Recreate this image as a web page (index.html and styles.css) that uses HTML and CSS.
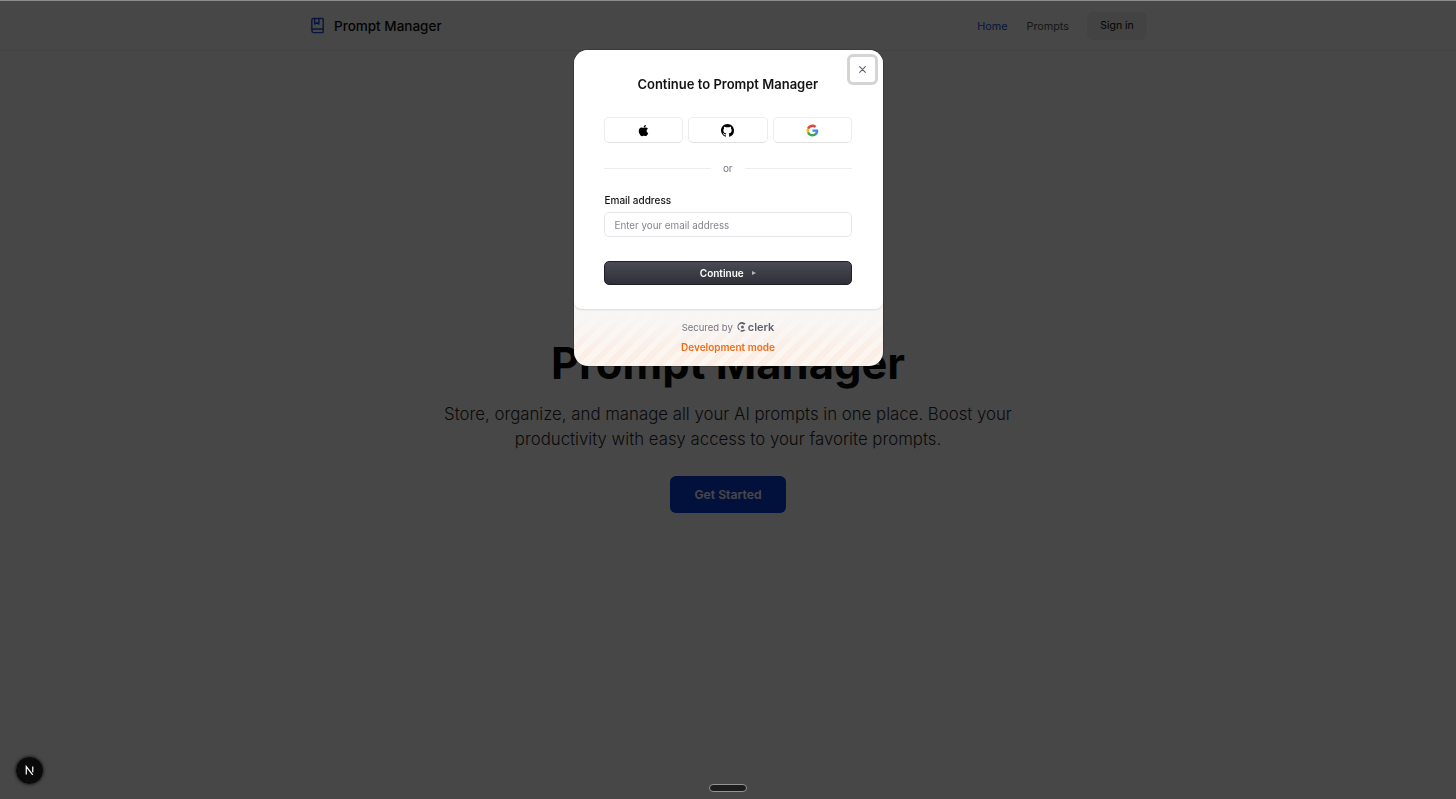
FILE: index.html
```html
<!DOCTYPE html>
<html lang="en">
<head>
    <meta charset="UTF-8">
    <meta name="viewport" content="width=device-width, initial-scale=1.0">
    <title>Prompt Manager</title>
    <link rel="stylesheet" href="styles.css">
</head>
<body>

<header class="site-header">
    <div class="header-inner">
        <a class="brand" href="#">
            <svg class="brand-icon" viewBox="0 0 24 24" fill="none" stroke="currentColor" stroke-width="2" stroke-linecap="round" stroke-linejoin="round">
                <path d="M4 19.5v-15A2.5 2.5 0 0 1 6.500 2H19a1 1 0 0 1 1 1v18a1 1 0 0 1-1 1H6.500a1 1 0 0 1 0-5H20"/>
                <path d="M8 2v8l3-2 3 2V2"/>
            </svg>
            <span>Prompt Manager</span>
        </a>
        <nav class="nav">
            <a class="nav-link active" href="#">Home</a>
            <a class="nav-link" href="#">Prompts</a>
            <button class="signin" type="button">Sign in</button>
        </nav>
    </div>
</header>

<main class="hero">
    <h1>Prompt Manager</h1>
    <p>Store, organize, and manage all your AI prompts in one place. Boost your productivity with easy access to your favorite prompts.</p>
    <button class="get-started" type="button">Get Started</button>
</main>

<div class="overlay">
    <div class="modal">
        <div class="card">
            <button class="close" type="button" aria-label="Close">
                <svg viewBox="0 0 16 16" fill="none" stroke="currentColor" stroke-width="1.300" stroke-linecap="round"><path d="M4.500 4.500l7 7M11.500 4.500l-7 7"/></svg>
            </button>
            <h2>Continue to Prompt Manager</h2>
            <div class="socials">
                <button class="social" type="button" aria-label="Apple">
                    <svg viewBox="0 0 24 24" fill="#000"><path d="M17.050 20.280c-.980.950-2.050.800-3.080.350-1.090-.460-2.090-.480-3.240 0-1.440.620-2.200.440-3.060-.350C2.790 15.250 3.510 7.590 9.050 7.310c1.350.070 2.290.740 3.080.800 1.180-.240 2.310-.930 3.570-.840 1.510.120 2.650.720 3.400 1.800-3.120 1.870-2.380 5.980.480 7.130-.570 1.500-1.310 2.990-2.540 4.090zM12.030 7.250c-.150-2.230 1.660-4.070 3.740-4.250.290 2.580-2.340 4.500-3.740 4.250z"/></svg>
                </button>
                <button class="social" type="button" aria-label="GitHub">
                    <svg viewBox="0 0 16 16" fill="#000"><path d="M8 0C3.580 0 0 3.580 0 8c0 3.540 2.290 6.530 5.470 7.590.400.070.550-.170.550-.380 0-.190-.010-.820-.010-1.490-2.010.370-2.530-.490-2.690-.940-.090-.230-.480-.940-.820-1.130-.280-.150-.680-.520-.010-.530.630-.010 1.080.580 1.230.820.720 1.210 1.870.870 2.330.660.070-.520.280-.870.510-1.070-1.780-.200-3.640-.890-3.640-3.950 0-.870.310-1.590.820-2.150-.080-.200-.360-1.020.080-2.120 0 0 .670-.210 2.200.820.640-.180 1.320-.270 2-.270s1.360.090 2 .270c1.530-1.040 2.200-.820 2.200-.820.440 1.100.160 1.920.080 2.120.510.560.820 1.270.820 2.150 0 3.070-1.870 3.750-3.650 3.950.290.250.540.730.540 1.480 0 1.070-.010 1.930-.010 2.200 0 .210.150.460.550.380A8.010 8.010 0 0 0 16 8c0-4.420-3.580-8-8-8z"/></svg>
                </button>
                <button class="social" type="button" aria-label="Google">
                    <svg viewBox="0 0 24 24">
                        <path fill="#4285F4" d="M22.560 12.250c0-.780-.070-1.530-.200-2.250H12v4.260h5.920c-.260 1.370-1.040 2.530-2.210 3.310v2.770h3.570c2.080-1.920 3.280-4.740 3.280-8.090z"/>
                        <path fill="#34A853" d="M12 23c2.970 0 5.460-.980 7.280-2.660l-3.570-2.770c-.980.660-2.230 1.060-3.710 1.060-2.860 0-5.290-1.930-6.160-4.530H2.180v2.840C3.990 20.530 7.700 23 12 23z"/>
                        <path fill="#FBBC05" d="M5.840 14.090c-.220-.660-.350-1.360-.350-2.090s.130-1.430.350-2.090V7.070H2.180C1.430 8.550 1 10.220 1 12s.430 3.450 1.180 4.930l3.660-2.840z"/>
                        <path fill="#EA4335" d="M12 5.380c1.620 0 3.060.560 4.210 1.640l3.150-3.150C17.450 2.090 14.970 1 12 1 7.700 1 3.990 3.470 2.180 7.070l3.660 2.840c.870-2.600 3.300-4.530 6.160-4.530z"/>
                    </svg>
                </button>
            </div>
            <div class="divider"><span>or</span></div>
            <label class="field-label" for="email">Email address</label>
            <input class="field" id="email" type="text" placeholder="Enter your email address">
            <button class="continue" type="button">Continue <span class="caret"></span></button>
        </div>
        <div class="modal-footer">
            <div class="secured">
                <span>Secured by</span>
                <span class="clerk">
                    <svg viewBox="0 0 14 14" fill="currentColor"><path d="M11.700 2.200A6.300 6.300 0 0 0 2.600 2c-2.500 2.300-2.600 6.800-.300 9.300.300.300 3 .300 1.100-1.600a4.200 4.200 0 0 1 .300-6.100 4.200 4.200 0 0 1 5.400-.100c1 .900 3.300-.600 2.600-1.300z"/><circle cx="7.600" cy="7" r="2.100"/><path d="M11.700 11.700a6.300 6.300 0 0 1-6.400 1.700c-1-.300-.800-1.600.400-1.900 1.400-.300 2.900-.500 4-.600.800 0 2.700.100 2 .800z"/></svg>
                    clerk
                </span>
            </div>
            <div class="dev-mode">Development mode</div>
        </div>
    </div>
</div>

<button class="next-badge" type="button" aria-label="Next.js">
    <svg viewBox="0 0 16 16" fill="none" stroke="#fff" stroke-width="1.500"><path d="M4 13V3.200L12 13.500M12 3v7"/></svg>
</button>
<div class="home-pill"></div>

</body>
</html>
```

FILE: styles.css
```css
* {
    box-sizing: border-box;
}
body {
    margin: 0;
    height: 799px;
    overflow: hidden;
    font-family: Inter, 'Noto Sans', sans-serif;
    background-color: #fff;
    color: #0a0a0a;
}
button {
    font-family: inherit;
}
a {
    text-decoration: none;
}

/* page behind the modal */
.site-header {
    height: 51px;
    border-bottom: 1px solid #f0f0f0;
}
.header-inner {
    width: 838px;
    height: 50px;
    margin: 0 auto;
    display: flex;
    align-items: center;
    justify-content: space-between;
}
.brand {
    display: flex;
    align-items: center;
    gap: 8px;
    margin-top: 1px;
    color: #0a0a0a;
    font-size: 13.500px;
    font-weight: 500;
}
.brand-icon {
    width: 17px;
    height: 19px;
    margin-top: -1px;
    color: #1d4ed8;
}
.nav {
    display: flex;
    align-items: center;
}
.nav-link {
    font-size: 10.800px;
    color: #52525b;
    margin-right: 19px;
    margin-top: 3px;
}
.nav-link.active {
    color: #1d4ed8;
}
.nav-link:nth-child(2) {
    margin-right: 18px;
}
.signin {
    width: 60px;
    height: 28px;
    margin-top: 1px;
    border: none;
    border-radius: 6px;
    background-color: #efefef;
    color: #0a0a0a;
    font-size: 10.500px;
    font-weight: 400;
}
.hero {
    padding-top: 285px;
    text-align: center;
}
.hero h1 {
    margin: 0;
    height: 54px;
    font-size: 43.500px;
    line-height: 54px;
    font-weight: 700;
}
.hero p {
    width: 600px;
    margin: 12px auto 0;
    font-size: 16.800px;
    line-height: 25px;
    font-weight: 300;
    color: #27272a;
}
.get-started {
    width: 116px;
    height: 37px;
    margin-top: 24px;
    border: none;
    border-radius: 6px;
    background-color: #0a3fd6;
    color: #fff;
    font-size: 12.200px;
    font-weight: 600;
}

/* modal */
.overlay {
    position: fixed;
    inset: 0;
    display: flex;
    justify-content: center;
    padding-top: 50px;
    background-color: rgba(0, 0, 0, 0.72);
    border-top: 1px solid #8c8c8c;
}
.modal {
    width: 309px;
    height: 316px;
    margin-top: -1px;
    border-radius: 14px;
    overflow: hidden;
    background: repeating-linear-gradient(-45deg, #fbeee6 0, #fbeee6 6px, #fdf5f0 6px, #fdf5f0 12px);
    box-shadow: 0 0 0 1px rgba(0, 0, 0, 0.2);
    display: flex;
    flex-direction: column;
    position: relative;
}
.card {
    height: 259px;
    padding: 0 30.500px 0 30px;
    background-color: #fff;
    border-radius: 0 0 8px 8px;
    box-shadow: 0 1px 2px rgba(0, 0, 0, 0.12);
    position: relative;
    z-index: 1;
}
.close {
    position: absolute;
    top: 4px;
    right: 5px;
    width: 31px;
    height: 31px;
    padding: 0;
    display: flex;
    align-items: center;
    justify-content: center;
    background-color: #fff;
    color: #5e5f6e;
    border: 3px solid #d4d4d4;
    border-radius: 6px;
}
.close svg {
    width: 13px;
    height: 13px;
}
.card h2 {
    margin: 0;
    padding-top: 26px;
    height: 67px;
    font-size: 13px;
    line-height: 17px;
    font-weight: 600;
    text-align: center;
    color: #131316;
}
.socials {
    display: flex;
    gap: 5px;
}
.social {
    flex: 1;
    height: 26px;
    padding: 0;
    display: flex;
    align-items: center;
    justify-content: center;
    background-color: #fff;
    border: 1px solid #ededed;
    border-bottom-color: #e0e0e0;
    border-radius: 5px;
}
.social svg {
    width: 13px;
    height: 13px;
}
.social:first-child svg {
    width: 15px;
    height: 15px;
}
.divider {
    display: flex;
    align-items: center;
    gap: 12px;
    height: 18px;
    margin-top: 16px;
    font-size: 10px;
    color: #747686;
}
.divider::before,
.divider::after {
    content: "";
    flex: 1;
    height: 1px;
    background-color: #ededed;
}
.field-label {
    display: block;
    margin-top: 16px;
    padding-left: 1px;
    height: 19px;
    font-size: 10px;
    line-height: 14px;
    font-weight: 500;
    color: #131316;
}
.field {
    display: block;
    width: 100%;
    height: 25px;
    padding: 1px 10px 0;
    font-family: inherit;
    font-size: 9.800px;
    border: 1px solid #e6e6e8;
    border-radius: 5px;
    outline: none;
}
.field::placeholder {
    color: #85858f;
}
.continue {
    display: flex;
    align-items: center;
    justify-content: center;
    gap: 7px;
    width: 100%;
    height: 24px;
    margin-top: 24px;
    border: 1px solid #1f1f27;
    border-radius: 5px;
    background: linear-gradient(#4a4a54, #2f2f37);
    color: #fff;
    font-size: 10px;
    font-weight: 600;
}
.caret {
    width: 0;
    height: 0;
    margin-left: 1px;
    border-left: 4px solid #b5b5bb;
    border-top: 2.500px solid transparent;
    border-bottom: 2.500px solid transparent;
}
.modal-footer {
    flex: 1;
    padding-top: 11px;
    text-align: center;
    background: linear-gradient(#f7f7f7 0, rgba(247, 247, 247, 0) 75%);
}
.secured {
    display: flex;
    align-items: center;
    justify-content: center;
    gap: 4px;
    height: 14px;
    font-size: 9.500px;
    color: #747686;
}
.clerk {
    display: flex;
    align-items: center;
    gap: 1px;
    font-size: 11px;
    font-weight: 600;
    color: #5e5f6e;
}
.clerk svg {
    width: 10px;
    height: 10px;
}
.dev-mode {
    margin-top: 6px;
    font-size: 10px;
    line-height: 14px;
    font-weight: 600;
    color: #f36b16;
}

/* stuff from the dev server and the browser */
.next-badge {
    position: fixed;
    left: 15px;
    bottom: 14px;
    width: 29px;
    height: 29px;
    padding: 0;
    display: flex;
    align-items: center;
    justify-content: center;
    border: 1px solid #333;
    border-radius: 50%;
    background-color: #0a0a0a;
    box-shadow: 0 0 3px rgba(0, 0, 0, 0.5);
}
.next-badge svg {
    width: 13px;
    height: 13px;
}
.home-pill {
    position: fixed;
    left: 709px;
    top: 784px;
    width: 38px;
    height: 8px;
    border: 1.500px solid #949494;
    border-radius: 4px;
    background-color: #1d1d1d;
}
```
